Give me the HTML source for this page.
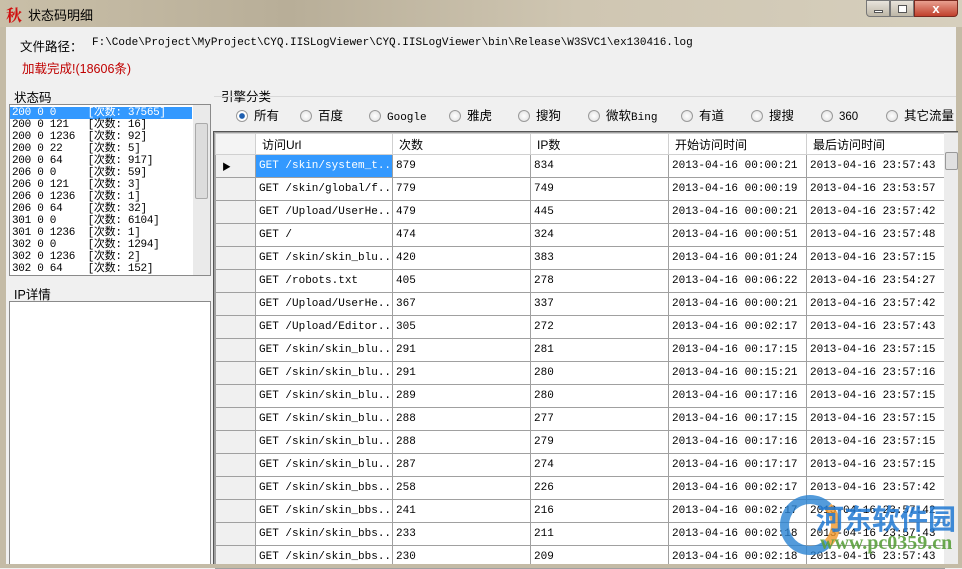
<!DOCTYPE html>
<html><head><meta charset="utf-8"><style>
*{margin:0;padding:0;box-sizing:border-box}
body{width:962px;height:568px;overflow:hidden;background:#f0f0f0;font-family:"Liberation Sans","Noto Sans CJK SC",sans-serif;font-size:12px;position:relative;color:#000}
.a{position:absolute}
.mono{font-family:"Liberation Mono","Noto Sans CJK SC",monospace}
.title{left:0;top:0;width:962px;height:27px;background:linear-gradient(90deg,#c9bfa8,#b8ae98 30%,#cfc6b2 60%,#d6cfbd);}
.frame{left:0;top:27px;width:6px;height:541px;background:#c4bba6}
.frame2{left:956px;top:27px;width:6px;height:541px;background:#c4bba6}
.bot{left:0;top:564px;width:962px;height:4px;background:#c4bba6}
table{border-collapse:collapse;position:absolute;left:215px;top:133px;table-layout:fixed;width:729px}
td{border:1px solid #a0a0a0;height:23px;padding-left:3px;font-size:11px;white-space:nowrap;overflow:hidden;background:#fff}
td.h{background:#f0f0f0}
tr.hd td{height:21px;background:#fff;font-size:12px;padding-left:6px;border-color:#d0d0d0;font-family:"Liberation Sans","Noto Sans CJK SC",sans-serif}
.lst div{height:12px;line-height:12px;font-size:11px;padding-left:2px;white-space:pre;font-family:"Liberation Mono","Noto Sans CJK SC",monospace;letter-spacing:-0.3px}
.rad{display:inline-block;width:12px;height:12px;border-radius:50%;border:1px solid #9a9a9a;background:radial-gradient(#fff,#ddd);vertical-align:-2px;margin-right:6px}
.rr span.o{position:absolute;top:0;line-height:16px}
</style></head><body>
<div class="a title"></div>
<div class="a" style="left:6px;top:3px;color:#d01010;font-size:16px;font-weight:bold;font-family:'Noto Serif CJK SC',serif">秋</div>
<div class="a" style="left:28px;top:5px;font-size:13px">状态码明细</div>
<div class="a" style="left:866px;top:0;width:24px;height:17px;border:1px solid #777;border-radius:0 0 0 4px;background:linear-gradient(#e8e4dc,#bdb6a6)"><div class="a" style="left:7px;top:9px;width:9px;height:3px;background:#fff;border:1px solid #555"></div></div>
<div class="a" style="left:890px;top:0;width:24px;height:17px;border:1px solid #777;background:linear-gradient(#e8e4dc,#bdb6a6)"><div class="a" style="left:7px;top:4px;width:9px;height:8px;border:1px solid #555;background:#fff"></div></div>
<div class="a" style="left:914px;top:0;width:44px;height:17px;border:1px solid #7a2a20;border-radius:0 0 4px 0;background:linear-gradient(#e8a090,#c0402c);color:#fff;font-weight:bold;text-align:center;font-size:13px;line-height:15px">x</div>
<div class="a frame"></div><div class="a frame2"></div>
<div class="a" style="left:20px;top:36px;font-size:12.5px">文件路径：</div>
<div class="a mono" style="left:92px;top:37px;font-size:11px">F:\Code\Project\MyProject\CYQ.IISLogViewer\CYQ.IISLogViewer\bin\Release\W3SVC1\ex130416.log</div>
<div class="a" style="left:22px;top:58px;color:#c00000;font-size:12.5px">加载完成!(18606条)</div>
<div class="a" style="left:14px;top:87px;font-size:12.5px">状态码</div>
<div class="a" style="left:221px;top:86px;font-size:12.5px">引擎分类</div>
<div class="a" style="left:214px;top:96px;width:742px;height:1px;background:#d8d8d8"></div>
<div class="a lst" style="left:9px;top:104px;width:202px;height:172px;border:1px solid #8a8a8a;background:#fff;padding-top:2px">
<div style="background:#3399ff;color:#fff;width:182px">200 0 0     [次数: 37565]</div>
<div>200 0 121   [次数: 16]</div><div>200 0 1236  [次数: 92]</div><div>200 0 22    [次数: 5]</div><div>200 0 64    [次数: 917]</div><div>206 0 0     [次数: 59]</div><div>206 0 121   [次数: 3]</div><div>206 0 1236  [次数: 1]</div><div>206 0 64    [次数: 32]</div><div>301 0 0     [次数: 6104]</div><div>301 0 1236  [次数: 1]</div><div>302 0 0     [次数: 1294]</div><div>302 0 1236  [次数: 2]</div><div>302 0 64    [次数: 152]</div>
<div class="a" style="left:183px;top:0;width:17px;height:170px;background:#eaeaea"><div class="a" style="left:2px;top:18px;width:13px;height:76px;background:#dcdcdc;border:1px solid #aaa;border-radius:2px"></div></div>
</div>
<div class="a" style="left:14px;top:284px;font-size:12.5px">IP详情</div>
<div class="a" style="left:9px;top:301px;width:202px;height:264px;border:1px solid #8a8a8a;background:#fff"></div>
<div class="a rr" style="left:236px;top:108px;font-size:12.5px;white-space:nowrap;height:16px;width:720px">
<span class="o" style="left:0"><span class="rad" style="background:radial-gradient(#1e5fb0 35%,#fff 45%)"></span>所有</span>
<span class="o" style="left:64px"><span class="rad"></span>百度</span>
<span class="o" style="left:133px"><span class="rad"></span><span class="mono" style="font-size:11px">Google</span></span>
<span class="o" style="left:213px"><span class="rad"></span>雅虎</span>
<span class="o" style="left:282px"><span class="rad"></span>搜狗</span>
<span class="o" style="left:352px"><span class="rad"></span>微软<span class="mono" style="font-size:11px">Bing</span></span>
<span class="o" style="left:445px"><span class="rad"></span>有道</span>
<span class="o" style="left:515px"><span class="rad"></span>搜搜</span>
<span class="o" style="left:585px"><span class="rad"></span><span style="font-size:11.5px">360</span></span>
<span class="o" style="left:650px"><span class="rad"></span>其它流量</span>
</div>
<div class="a" style="left:213px;top:131px;width:745px;height:437px;border:1px solid #555;border-right:none;background:#a0a0a0"></div>
<table class="mono">
<colgroup><col style="width:40px"><col style="width:137px"><col style="width:138px"><col style="width:138px"><col style="width:138px"><col style="width:138px"></colgroup>
<tr class="hd"><td class="h" style="background:#f4f4f4"></td><td>访问Url</td><td>次数</td><td>IP数</td><td>开始访问时间</td><td>最后访问时间</td></tr>
<tr><td class="h" style="font-size:9px;padding-left:6px">▶</td><td style="background:#3399ff;color:#fff">GET /skin/system_t...</td><td>879</td><td>834</td><td>2013-04-16 00:00:21</td><td>2013-04-16 23:57:43</td></tr>
<tr><td class="h"></td><td>GET /skin/global/f...</td><td>779</td><td>749</td><td>2013-04-16 00:00:19</td><td>2013-04-16 23:53:57</td></tr>
<tr><td class="h"></td><td>GET /Upload/UserHe...</td><td>479</td><td>445</td><td>2013-04-16 00:00:21</td><td>2013-04-16 23:57:42</td></tr>
<tr><td class="h"></td><td>GET /</td><td>474</td><td>324</td><td>2013-04-16 00:00:51</td><td>2013-04-16 23:57:48</td></tr>
<tr><td class="h"></td><td>GET /skin/skin_blu...</td><td>420</td><td>383</td><td>2013-04-16 00:01:24</td><td>2013-04-16 23:57:15</td></tr>
<tr><td class="h"></td><td>GET /robots.txt</td><td>405</td><td>278</td><td>2013-04-16 00:06:22</td><td>2013-04-16 23:54:27</td></tr>
<tr><td class="h"></td><td>GET /Upload/UserHe...</td><td>367</td><td>337</td><td>2013-04-16 00:00:21</td><td>2013-04-16 23:57:42</td></tr>
<tr><td class="h"></td><td>GET /Upload/Editor...</td><td>305</td><td>272</td><td>2013-04-16 00:02:17</td><td>2013-04-16 23:57:43</td></tr>
<tr><td class="h"></td><td>GET /skin/skin_blu...</td><td>291</td><td>281</td><td>2013-04-16 00:17:15</td><td>2013-04-16 23:57:15</td></tr>
<tr><td class="h"></td><td>GET /skin/skin_blu...</td><td>291</td><td>280</td><td>2013-04-16 00:15:21</td><td>2013-04-16 23:57:16</td></tr>
<tr><td class="h"></td><td>GET /skin/skin_blu...</td><td>289</td><td>280</td><td>2013-04-16 00:17:16</td><td>2013-04-16 23:57:15</td></tr>
<tr><td class="h"></td><td>GET /skin/skin_blu...</td><td>288</td><td>277</td><td>2013-04-16 00:17:15</td><td>2013-04-16 23:57:15</td></tr>
<tr><td class="h"></td><td>GET /skin/skin_blu...</td><td>288</td><td>279</td><td>2013-04-16 00:17:16</td><td>2013-04-16 23:57:15</td></tr>
<tr><td class="h"></td><td>GET /skin/skin_blu...</td><td>287</td><td>274</td><td>2013-04-16 00:17:17</td><td>2013-04-16 23:57:15</td></tr>
<tr><td class="h"></td><td>GET /skin/skin_bbs...</td><td>258</td><td>226</td><td>2013-04-16 00:02:17</td><td>2013-04-16 23:57:42</td></tr>
<tr><td class="h"></td><td>GET /skin/skin_bbs...</td><td>241</td><td>216</td><td>2013-04-16 00:02:17</td><td>2013-04-16 23:57:42</td></tr>
<tr><td class="h"></td><td>GET /skin/skin_bbs...</td><td>233</td><td>211</td><td>2013-04-16 00:02:18</td><td>2013-04-16 23:57:43</td></tr>
<tr><td class="h"></td><td>GET /skin/skin_bbs...</td><td>230</td><td>209</td><td>2013-04-16 00:02:18</td><td>2013-04-16 23:57:43</td></tr>
</table>
<div class="a" style="left:944px;top:133px;width:14px;height:435px;background:#ececec"><div class="a" style="left:1px;top:19px;width:13px;height:18px;border:1px solid #999;background:#e0e0e0;border-radius:2px"></div></div>
<div class="a" style="left:780px;top:495px;width:60px;height:60px;border-radius:50%;border:9px solid rgba(40,130,210,.8);border-right-color:rgba(240,150,40,.8)"></div>
<div class="a" style="left:816px;top:498px;color:rgba(30,120,210,.85);font-size:28px;font-weight:bold">河东软件园</div>
<div class="a" style="left:820px;top:532px;color:rgba(90,160,60,.9);font-size:20px;font-weight:bold;font-family:'Liberation Serif',serif">www.pc0359.cn</div>
<div class="a bot"></div>
</body></html>
